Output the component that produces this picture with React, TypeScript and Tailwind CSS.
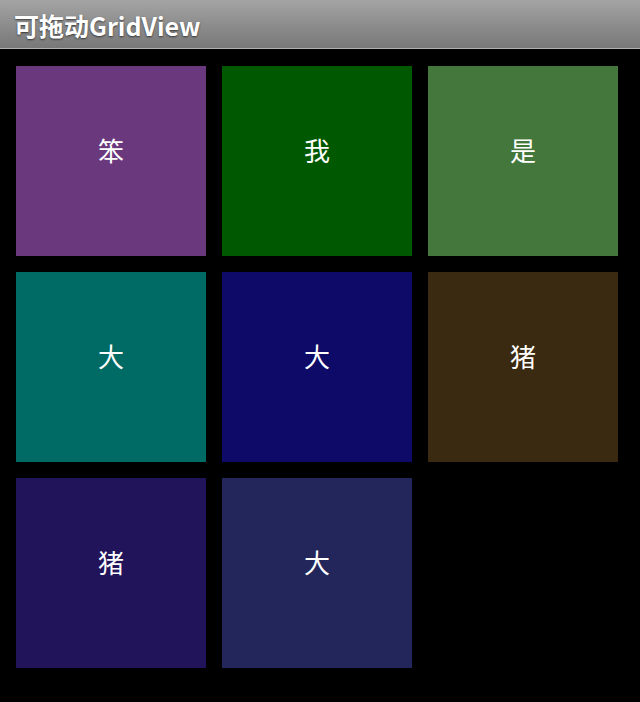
const tiles = [
  { text: '笨', bg: 'bg-[#6a387c]' },
  { text: '我', bg: 'bg-[#005800]' },
  { text: '是', bg: 'bg-[#44773c]' },
  { text: '大', bg: 'bg-[#006a64]' },
  { text: '大', bg: 'bg-[#0e0a68]' },
  { text: '猪', bg: 'bg-[#3a2a12]' },
  { text: '猪', bg: 'bg-[#22145a]' },
  { text: '大', bg: 'bg-[#22265a]' },
]

export default function App() {
  return (
    <div className="flex h-[702px] w-[640px] flex-col bg-black font-['Noto_Sans_CJK_SC','Noto_Sans',sans-serif]">
      <div className="flex h-[49px] items-center border-b border-[#b0b0b0] bg-gradient-to-b from-[#a4a4a4] to-[#787878] px-[14px] pt-[2px]">
        <span className="text-[25px] font-bold leading-none text-white [text-shadow:0_1px_2px_rgba(0,0,0,0.6)]">
          可拖动GridView
        </span>
      </div>
      <div className="grid grid-cols-[repeat(3,190px)] gap-4 px-4 pt-[17px]">
        {tiles.map((t, i) => (
          <div
            key={i}
            className={`flex h-[190px] items-center justify-center pb-[24px] ${t.bg} text-[26px] text-white`}
          >
            {t.text}
          </div>
        ))}
      </div>
    </div>
  )
}
